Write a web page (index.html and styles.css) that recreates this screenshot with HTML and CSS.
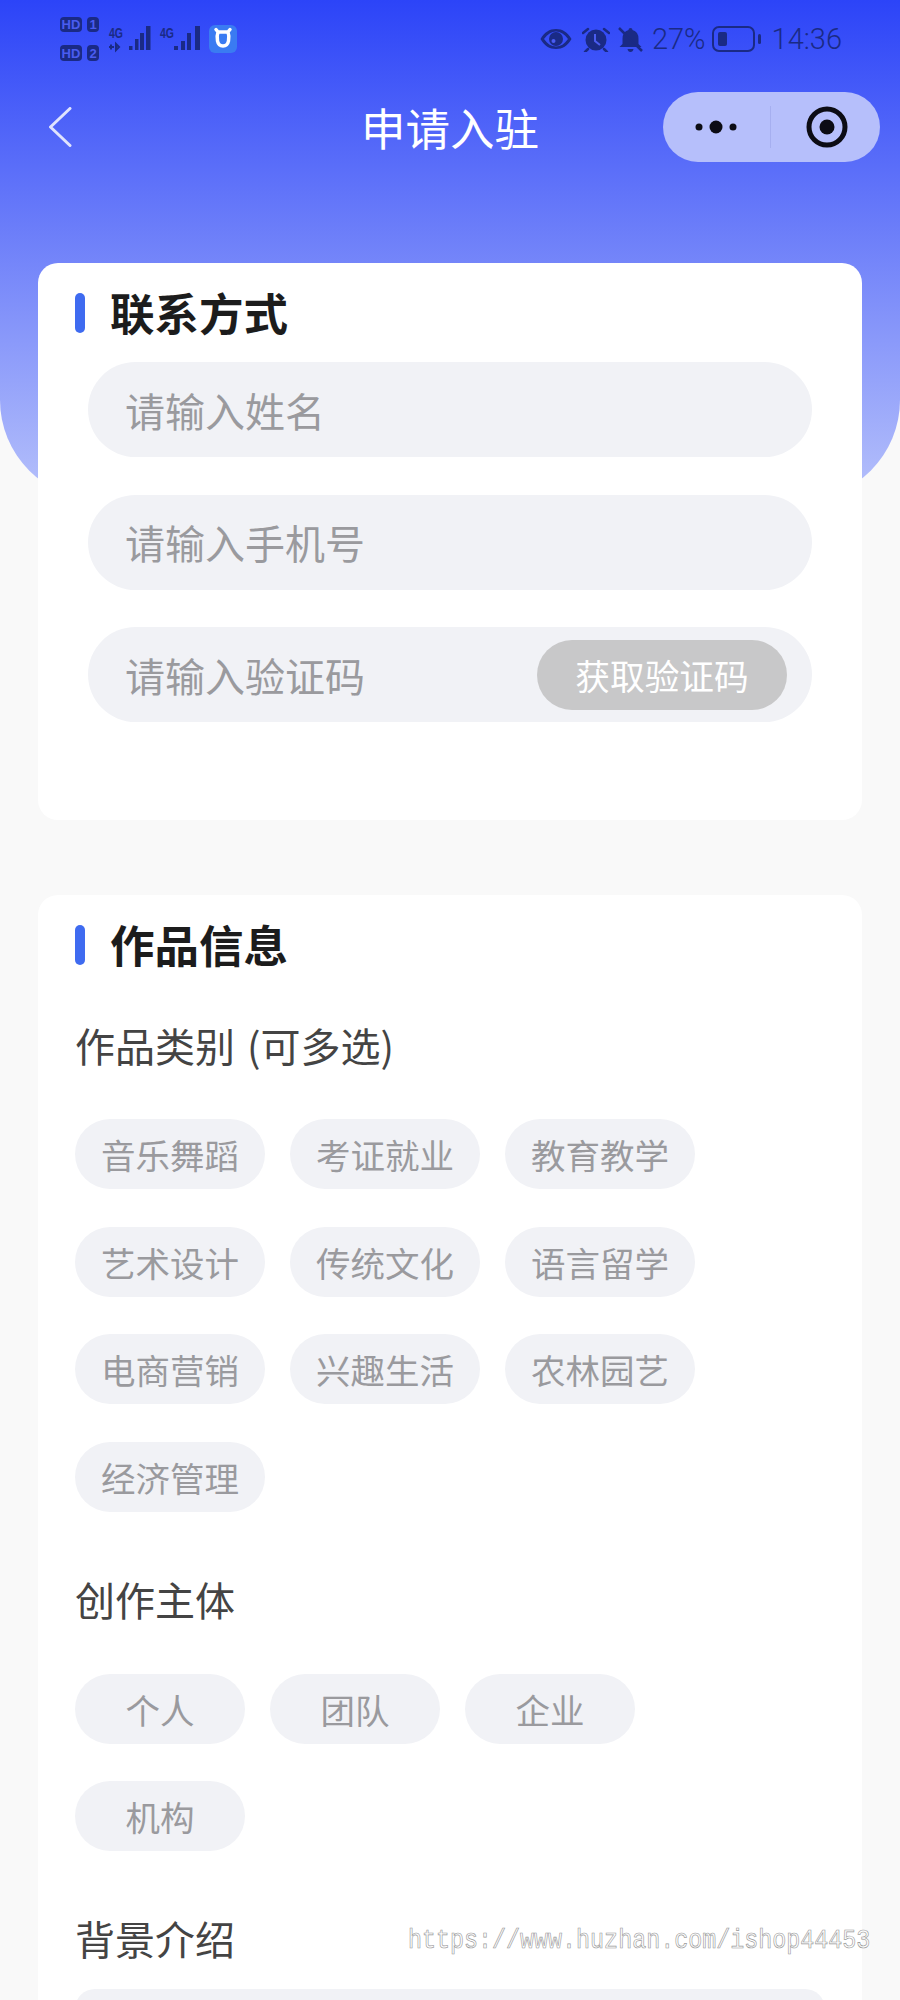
FILE: index.html
```html
<!DOCTYPE html>
<html lang="zh-CN">
<head>
<meta charset="utf-8">
<title>申请入驻</title>
<link rel="stylesheet" href="styles.css">
</head>
<body>
<div class="page">
  <header class="hero">
    <div class="status">
      <svg class="status-left" width="180" height="46" viewBox="0 0 180 46">
        <g class="ink">
          <rect x="0" y="0" width="22" height="15" rx="4"/>
          <rect x="27" y="0" width="12" height="15" rx="4"/>
          <rect x="0" y="28" width="22" height="16" rx="4"/>
          <rect x="27" y="28" width="12" height="16" rx="4"/>
          <rect x="69" y="29" width="3.500" height="4"/>
          <rect x="75" y="22" width="3.500" height="11"/>
          <rect x="80" y="16" width="4" height="17"/>
          <rect x="86" y="9" width="4.500" height="24"/>
          <rect x="114" y="29" width="4" height="4"/>
          <rect x="121" y="24" width="4" height="9"/>
          <rect x="127" y="16" width="4" height="17"/>
          <rect x="135" y="9" width="5" height="24"/>
          <path d="M49 30h5M51 27.500v5M56 27v6l3-3z"/>
        </g>
        <g class="hd">
          <text x="11" y="12">HD</text>
          <text x="33" y="12">1</text>
          <text x="11" y="41">HD</text>
          <text x="33" y="41">2</text>
        </g>
        <g class="net">
          <text x="49" y="21" textLength="14" lengthAdjust="spacingAndGlyphs">4G</text>
          <text x="100" y="21" textLength="14" lengthAdjust="spacingAndGlyphs">4G</text>
        </g>
        <rect class="app" x="149" y="8" width="28" height="28" rx="6"/>
        <path class="cow" d="M158 15h10q1.500 4 .5 9q-1 5-5.500 5t-5.500-5q-1-5 .5-9zM156 12.500l2.500 3M170 12.500l-2.500 3"/>
      </svg>
      <div class="status-right">
        <svg width="32" height="20" viewBox="0 0 31 20">
          <path class="ink-fill" fill-rule="evenodd" d="M0 10C4 3 9 0 15.500 0S27 3 31 10C27 17 22 20 15.500 20S4 17 0 10zM3.500 10C7 15 11 17.500 15.500 17.500S24 15 27.500 10C24 5 20 2.500 15.500 2.500S7 5 3.500 10z"/>
          <circle class="ink-fill" cx="15.500" cy="10" r="7"/>
          <circle class="hole" cx="13" cy="12" r="2"/>
        </svg>
        <svg class="gap-a" width="28" height="25" viewBox="0 0 28 25">
          <circle class="ink-fill" cx="14" cy="13" r="10.500"/>
          <path class="hand" d="M13 7v7l5 4"/>
          <path class="ink-line" d="M1 6l5-4M27 6l-5-4M6 22l-3 3M22 22l3 3"/>
        </svg>
        <svg class="gap-b" width="25" height="25" viewBox="0 0 25 25">
          <path class="ink-fill" d="M12.500 1q2 0 2 2q6 1.500 6 9v5l3 3H1.500l3-3v-5q0-7.500 6-9q0-2 2-2zM9.500 22h6q-.5 3-3 3t-3-3z"/>
          <path class="slash" d="M1 1l23 23"/>
        </svg>
        <span class="status-text pct">27%</span>
        <svg class="gap-c" width="49" height="26" viewBox="0 0 49 26">
          <rect class="batt" x="1" y="1" width="41" height="24" rx="6"/>
          <rect class="ink-fill" x="6" y="6" width="9" height="14" rx="2"/>
          <rect class="ink-fill" x="46" y="8" width="3" height="10" rx="1.500"/>
        </svg>
        <span class="status-text time">14:36</span>
      </div>
    </div>
    <nav class="nav">
      <svg class="back" width="24" height="40" viewBox="0 0 24 40">
        <path d="M22 1.500L2.500 20 22 38.500"/>
      </svg>
      <h1 class="nav-title">申请入驻</h1>
      <div class="capsule">
        <div class="capsule-side">
          <svg width="44" height="16" viewBox="0 0 44 16">
            <circle cx="4" cy="8" r="3.500"/>
            <circle cx="21" cy="8" r="6.500"/>
            <circle cx="38" cy="8" r="3.500"/>
          </svg>
        </div>
        <span class="capsule-line"></span>
        <div class="capsule-side side-target">
          <svg width="42" height="42" viewBox="0 0 42 42">
            <circle class="ring" cx="21" cy="21" r="18"/>
            <circle cx="21" cy="21" r="7.500"/>
          </svg>
        </div>
      </div>
    </nav>
  </header>

  <main class="content">
    <section class="card card-contact">
      <h2 class="card-title">联系方式</h2>
      <div class="fields">
        <div class="field"><input class="field-input" placeholder="请输入姓名"></div>
        <div class="field"><input class="field-input" placeholder="请输入手机号"></div>
        <div class="field">
          <input class="field-input" placeholder="请输入验证码">
          <button class="code-btn" type="button">获取验证码</button>
        </div>
      </div>
    </section>

    <section class="card card-works">
      <h2 class="card-title">作品信息</h2>
      <h3 class="label label-first">作品类别 (可多选)</h3>
      <div class="chips chips-wide">
        <span class="chip">音乐舞蹈</span>
        <span class="chip">考证就业</span>
        <span class="chip">教育教学</span>
        <span class="chip">艺术设计</span>
        <span class="chip">传统文化</span>
        <span class="chip">语言留学</span>
        <span class="chip">电商营销</span>
        <span class="chip">兴趣生活</span>
        <span class="chip">农林园艺</span>
        <span class="chip">经济管理</span>
      </div>
      <h3 class="label">创作主体</h3>
      <div class="chips chips-narrow">
        <span class="chip">个人</span>
        <span class="chip">团队</span>
        <span class="chip">企业</span>
        <span class="chip">机构</span>
      </div>
      <h3 class="label">背景介绍</h3>
      <div class="textarea"></div>
    </section>
  </main>

  <div class="watermark">https://www.huzhan.com/ishop44453</div>
</div>
</body>
</html>
```
FILE: styles.css
```css
* { box-sizing: border-box; }
html, body { margin: 0; padding: 0; height: 2000px; overflow: hidden; }
body { background: #f9f9f9; font-family: "Noto Sans CJK SC", "Noto Sans", sans-serif; }
h1, h2, h3 { margin: 0; font-weight: 400; }

.page { position: relative; height: 2000px; overflow: hidden; }

/* header */
.hero {
  height: 500px;
  border-radius: 0 0 100px 100px;
  background: linear-gradient(180deg, #2c44f8 0%, #b6c1fb 100%);
}
.status {
  display: flex;
  justify-content: space-between;
  align-items: flex-start;
  height: 92px;
  padding: 17px 58px 0 60px;
}
.status-left { display: block; }
.ink rect { fill: #1a2a85; }
.ink path { fill: none; stroke: #1a2a85; stroke-width: 2; }
.hd text { fill: #4a5cf0; font: 700 13px "Liberation Sans", sans-serif; text-anchor: middle; }
.net text { fill: #1a2a85; font: 700 15px "Liberation Sans", sans-serif; }
.app { fill: #3a7bf2; }
.cow { fill: none; stroke: #fff; stroke-width: 3.500; stroke-linecap: round; stroke-linejoin: round; }

.status-right { display: flex; align-items: center; height: 30px; margin-top: 7px; margin-left: auto; }
.ink-fill { fill: #1a2a85; }
.hole { fill: #4a5cf0; }
.hand { fill: none; stroke: #4a5cf0; stroke-width: 2; }
.ink-line { fill: none; stroke: #1a2a85; stroke-width: 2.500; stroke-linecap: round; }
.slash { fill: none; stroke: #1a2a85; stroke-width: 2.500; }
.batt { fill: none; stroke: #1a2a85; stroke-width: 2; }
.gap-a { margin-left: 10px; }
.gap-b { margin-left: 8px; }
.gap-c { margin-left: 6px; }
.status-text { color: #1a2a85; font: 300 29px/30px Roboto, sans-serif; }
.pct { margin-left: 9px; }
.time { margin-left: 11px; }

.nav {
  display: grid;
  grid-template-columns: 1fr auto 1fr;
  align-items: center;
  height: 70px;
  padding: 0 20px 0 20px;
}
.back { display: block; margin-left: 28px; fill: none; stroke: #dfe3fd; stroke-width: 3; stroke-linecap: round; stroke-linejoin: round; }
.nav-title { color: #fff; font-size: 44.500px; line-height: 70px; }
.capsule {
  justify-self: end;
  display: flex;
  align-items: center;
  width: 217px;
  height: 70px;
  border-radius: 35px;
  background: #b6bffb;
}
.capsule-side { flex: 1; display: flex; justify-content: center; align-items: center; }
.capsule-side svg { display: block; fill: #0c0c14; }
.capsule-side .ring { fill: none; stroke: #0c0c14; stroke-width: 5; }
.side-target { padding-left: 2px; }
.capsule-line { width: 1px; height: 42px; background: #a6aff0; }

/* content */
.content {
  display: flex;
  flex-direction: column;
  gap: 75px;
  margin-top: -237px;
  padding: 0 38px;
}
.card { background: #fff; border-radius: 20px; }
.card-contact { height: 557px; padding: 19px 0 0; }
.card-works { padding: 19px 0 0; }
.card-title {
  display: flex;
  align-items: center;
  gap: 25px;
  height: 60px;
  padding-left: 37px;
  color: #1c1c1c;
  font-size: 44.500px;
  line-height: 60px;
  font-weight: 700;
}
.card-title::before {
  content: "";
  width: 10px;
  height: 40px;
  margin-top: 2px;
  border-radius: 5px;
  background: #3f6bf0;
}

.fields { display: flex; flex-direction: column; gap: 37.500px; margin: 20px 50px 0; }
.field {
  display: flex;
  align-items: center;
  height: 95px;
  padding: 0 25px 0 37px;
  border-radius: 47.500px;
  background: #f1f2f6;
}
.field-input {
  flex: 1;
  min-width: 0;
  border: 0;
  padding: 0;
  outline: 0;
  background: transparent;
  color: #333;
  font: 400 40px/60px "Noto Sans CJK SC", sans-serif;
}
.field-input::placeholder { color: #9a9a9e; opacity: 1; }
.code-btn {
  flex: none;
  width: 250px;
  height: 70px;
  border: 0;
  padding: 0;
  border-radius: 35px;
  background: #c8c8c9;
  color: #fff;
  font: 400 34.700px/70px "Noto Sans CJK SC", sans-serif;
}

.label {
  margin: 57px 0 0 37px;
  color: #444;
  font-size: 40px;
  line-height: 60px;
  word-spacing: 3px;
}
.label-first { margin-top: 41px; }

.chips { display: flex; flex-wrap: wrap; gap: 37.500px 25px; margin: 44px 37px 0; }
.chips-narrow { margin-top: 45px; }
.chip {
  display: flex;
  justify-content: center;
  align-items: center;
  height: 70px;
  border-radius: 35px;
  background: #f1f2f6;
  color: #9a9a9e;
  font-size: 34.500px;
  line-height: 70px;
}
.chips-wide .chip { width: 190px; }
.chips-narrow .chip { width: 170px; }

.textarea {
  height: 240px;
  margin: 21px 37px 0;
  border-radius: 20px;
  background: #f1f2f6;
}

.watermark {
  position: absolute;
  left: 408px;
  top: 1925px;
  color: rgba(255, 255, 255, .9);
  font: 400 23.350px/32px "Liberation Mono", monospace;
  -webkit-text-stroke: .6px #999;
  transform: scaleY(1.15);
  white-space: nowrap;
}
```
